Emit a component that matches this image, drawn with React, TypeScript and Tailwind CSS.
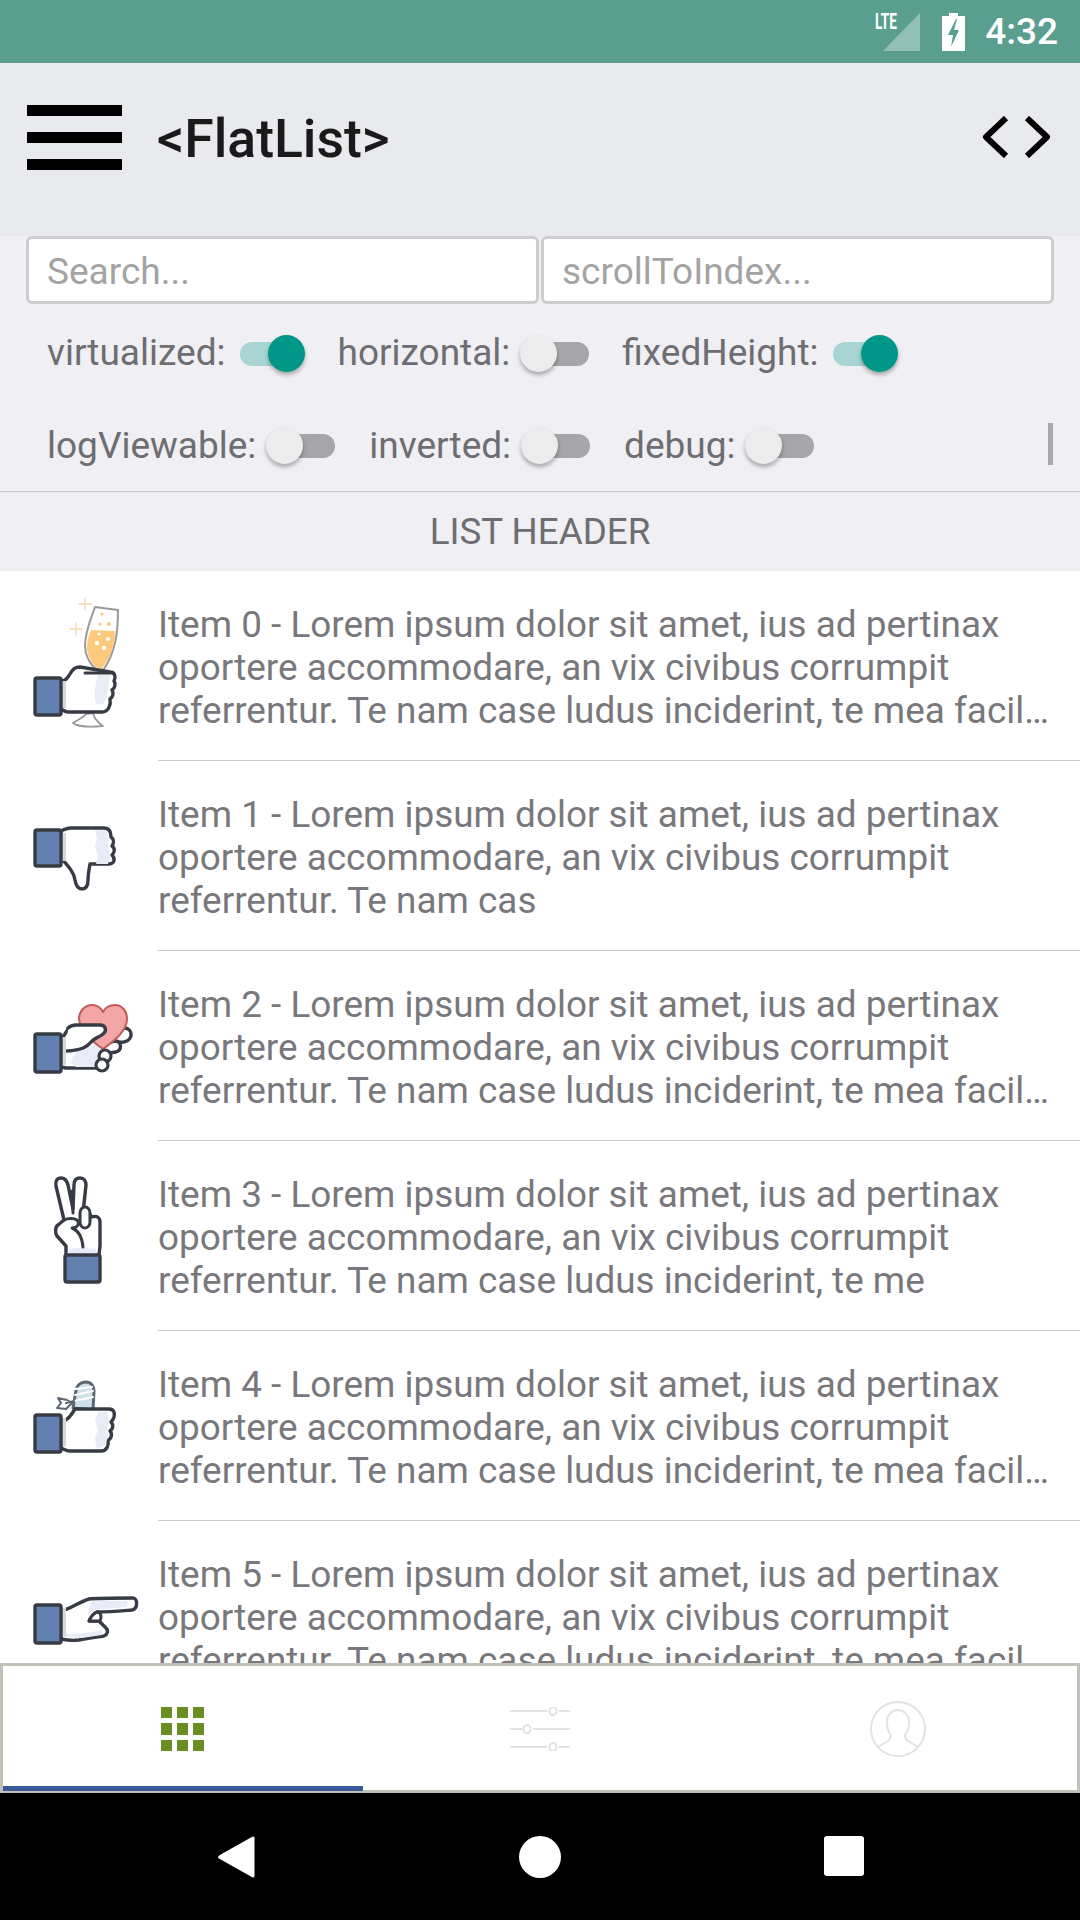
import { ReactNode } from "react";

const LOREM =
  " - Lorem ipsum dolor sit amet, ius ad pertinax oportere accommodare, an vix civibus corrumpit referrentur. ";

const FULL = "Te nam case ludus inciderint, te mea facil…";

const INK = "#373b44";
const SHADE = "#e9ebf6";
const BLUE = "#6381b0";

const Cuff = ({ x = 15, y, w = 26, h = 37 }: { x?: number; y: number; w?: number; h?: number }) => (
  <>
    <rect x={x} y={y} width={w} height={h} rx="2" fill={BLUE} stroke={INK} strokeWidth="3.4" />
  </>
);

const HandIcon = ({ children }: { children: ReactNode }) => (
  <svg
    className="mr-[18px] h-[150px] w-[120px] shrink-0"
    viewBox="0 0 120 150"
    fill="none"
    strokeLinejoin="round"
    strokeLinecap="round">
    {children}
  </svg>
);

const icons = [
  <HandIcon key="0">
    <path d="M65 7v12M59 13h12M56 32v12M50 38h12" stroke="#f3d9b0" strokeWidth="1.3" />
    <path d="M53 132c4-3 10-5 13-9l7-1c1 5 4 9 10 13-10 1-25 1-30-3z" fill="#fff" stroke="#9a9a9a" strokeWidth="1.8" />
    <path d="M75 16L98 19C98 40 96 60 84 78L78 80C70 74 65 64 65 55 65 40 72 25 75 16z" fill="#fff" stroke="#9a9a9a" strokeWidth="2" />
    <path d="M71 39L95 40C95 55 90 68 82 77L78 78C71 72 67 64 67 56 67 50 69 44 71 39z" fill="#fdc97c" />
    <circle cx="77" cy="52" r="2.2" fill="#fff" />
    <circle cx="88" cy="48" r="2" fill="#fff" />
    <circle cx="84" cy="57" r="2.2" fill="#fff" />
    <circle cx="79" cy="43" r="1.6" fill="#fff" />
    <circle cx="80" cy="33" r="1.6" fill="#fdc97c" />
    <circle cx="89" cy="33" r="2" fill="#fdc97c" />
    <circle cx="82" cy="23" r="1.5" fill="#fdc97c" />
    <path
      d="M41 90c4 0 6-2 9-7 3-5 5-7 10-7l30 5c5 0 6 5 4 9 2 3 1 7-2 9 2 3 1 7-2 9 1 5-1 13-8 13H48c-3 0-5-2-7-3z"
      fill="#fff"
      stroke={INK}
      strokeWidth="3.4"
    />
    <path d="M78 84h12l-1 6-1 8-2 9-3 6h-7c-2-8-1-20 2-29z" fill={SHADE} />
    <path d="M65 82l27 0" stroke={INK} strokeWidth="3" />
    <rect x="42" y="90" width="4" height="27" fill="#d6d6d6" />
    <Cuff y={87} />
  </HandIcon>,
  <HandIcon key="1">
    <path
      d="M41 50c4-2 6-3 10-3h33c5 0 7 4 7 9 3 2 3 6 1 9 3 2 3 6 0 9 4 4 2 9-3 9H70c-1 6-2 10-2 16 0 6-2 9-6 9-4 0-6-3-7-9-1-8-7-14-14-22z"
      fill="#fff"
      stroke={INK}
      strokeWidth="3.4"
    />
    <path d="M75 49h10l4 8-1 8 2 9-2 9H76l2-9-3-8 2-8z" fill={SHADE} />
    <rect x="42" y="52" width="4" height="28" fill="#d6d6d6" />
    <Cuff y={49} h={36} />
  </HandIcon>,
  <HandIcon key="2">
    <path d="M84 58L104 57c9 0 10 12 0 14L88 72z" fill="#fff" stroke={INK} strokeWidth="3.4" />
    <path d="M84 72L96 70c6 1 6 9 0 11L82 83z" fill="#fff" stroke={INK} strokeWidth="3.4" />
    <path d="M41 68c4-3 5-8 8-11l30-2v42H46l-5-1z" fill="#fff" stroke={INK} strokeWidth="3.4" />
    <path d="M50 92c4-10 10-18 20-20h12v24H56z" fill={SHADE} />
    <path
      d="M83 78C72 70 60 60 59 48c0-8 6-14 13-14 5 0 9 3 11 7 2-4 6-7 12-7 7 0 12 6 12 14 0 12-13 22-24 30z"
      fill="#f4a6a6"
      stroke="#c35a5a"
      strokeWidth="2"
    />
    <path d="M48 57c2-2 4-3 8-3h24c6 0 7 6 3 9-5 4-9 4-12 8-4 5-9 8-24 9" fill="#fff" stroke={INK} strokeWidth="3.4" />
    <circle cx="85" cy="85" r="6" fill="#fff" stroke={INK} strokeWidth="3.2" />
    <circle cx="82" cy="94" r="6" fill="#fff" stroke={INK} strokeWidth="3.2" />
    <rect x="42" y="66" width="4" height="28" fill="#d6d6d6" />
    <Cuff y={63} h={38} />
  </HandIcon>,
  <HandIcon key="3">
    <path
      d="M46 94V85L37 75c-2-3-2-9 1-11l6-5-8-34c-1-5 1-8 5-8 4 0 6 3 7 7l5 24 1-24c0-5 2-7 6-7 4 0 6 3 6 7l-3 28c4-1 8 2 9 4 5-2 8 1 8 5v24l-1 9z"
      fill="#fff"
      stroke={INK}
      strokeWidth="3.4"
    />
    <path d="M58 60l5 3-1 24 14 1v6H46l4-6 14-2-2-14z" fill={SHADE} />
    <path d="M65 46c3 0 5 3 5 6v9c0 3-2 6-5 6s-5-3-5-6v-9c0-3 2-6 5-6z" fill="#fff" stroke={INK} strokeWidth="3" />
    <path d="M44 59c4-2 10-2 13 0 3 3 1 8-5 8 5 2 10 8 11 19" stroke={INK} strokeWidth="3" />
    <path d="M52 30l1 22" stroke={INK} strokeWidth="3" />
    <Cuff x={45} y={94} w={35} h={27} />
  </HandIcon>,
  <HandIcon key="4">
    <path d="M53 57l3-18c1-5 5-8 10-8 5 0 8 4 8 9l-1 19z" fill="#cfe0ea" stroke="#5c6670" strokeWidth="3" />
    <path d="M55 44l18-4M54 50l19-4M55 38l17-2" stroke="#fff" strokeWidth="2" />
    <path d="M38 47l9 2 5 3-6 6-9-1 4-5zM46 52l8-2" fill="#fff" stroke="#5c6670" strokeWidth="2" />
    <path
      d="M41 71c4-1 7-3 10-7l4-6h34c5 0 6 4 5 8-1 3-2 4-3 5 3 3 2 7-1 9 3 3 1 8-2 9 1 5-1 11-7 11H50c-4 0-6-2-9-3z"
      fill="#fff"
      stroke={INK}
      strokeWidth="3.4"
    />
    <path d="M78 61h9l2 8-2 8 1 9-3 8-8 4-2-10 3-9-3-9z" fill={SHADE} />
    <rect x="42" y="67" width="4" height="28" fill="#d6d6d6" />
    <Cuff y={64} />
  </HandIcon>,
  <HandIcon key="5">
    <path
      d="M41 70c8-1 18-9 28-12 8-1 30-1 44-1 5 0 5 11-1 12-12 1-22 2-35 2-4 2-6 5-8 9h10l7 7c3 3 1 7-2 8-8 1-16 2-25 4-8 1-13 0-18-1z"
      fill="#fff"
      stroke={INK}
      strokeWidth="3.4"
    />
    <path d="M72 60l36 0-1 6-32 3-8 4zM44 92c10 2 24 0 38-3v5l-20 3-18-1z" fill={SHADE} />
    <path d="M70 78c2-4 4-6 8-7 3 1 4 5 2 9H70z" fill="#fff" stroke={INK} strokeWidth="3" />
    <rect x="42" y="67" width="4" height="28" fill="#d6d6d6" />
    <Cuff y={64} h={38} />
  </HandIcon>,
];

const rows = [
  LOREM + FULL,
  LOREM + "Te nam cas",
  LOREM + FULL,
  LOREM + "Te nam case ludus inciderint, te me",
  LOREM + FULL,
  LOREM + FULL,
];

const Toggle = ({ label, on }: { label: string; on?: boolean }) => (
  <div className="flex items-center">
    <span className="mr-[10px] text-[37px] leading-[40px] text-[#6d6d72]">{label}</span>
    <div className="relative h-[37px] w-[69px]">
      <div
        className={
          on
            ? "absolute left-[4px] top-[7px] h-[24px] w-[56px] rounded-full bg-[#a8d5d1]"
            : "absolute left-[6px] top-[7px] h-[24px] w-[63px] rounded-full bg-[#a6a6a8]"
        }
      />
      <div
        className={
          on
            ? "absolute right-0 top-0 h-[37px] w-[37px] rounded-full bg-[#009688] shadow-[0_3px_4px_rgba(0,0,0,0.3)]"
            : "absolute left-0 top-0 h-[37px] w-[37px] rounded-full bg-[#ececec] shadow-[0_3px_4px_rgba(0,0,0,0.3)]"
        }
      />
    </div>
  </div>
);

export default function App() {
  return (
    <div className="flex h-[1920px] w-[1080px] flex-col overflow-hidden bg-white font-['Roboto',sans-serif]">
      {/* status bar */}
      <div className="flex h-[63px] shrink-0 items-center justify-end bg-[#5a9e8f] pr-[22px]">
        <div className="relative mr-[22px] h-[38px] w-[37px]">
          <svg className="absolute inset-0" viewBox="0 0 37 38">
            <path d="M37 0v38H0z" fill="#fff" fillOpacity="0.35" />
          </svg>
          <span className="absolute -left-[8px] top-0 origin-top-left scale-x-[0.62] text-[22px] font-bold leading-[18px] text-white">
            LTE
          </span>
        </div>
        <svg className="mr-[20px] h-[38px] w-[23px]" viewBox="0 0 23 38">
          <path d="M7 0h9v3h7v35H0V3h7z" fill="#fff" />
          <path d="M14 6l-8 16h5l-2 12 8-17h-5l3-11z" fill="#5a9e8f" />
        </svg>
        <span className="text-[37px] font-medium leading-[42px] text-white">4:32</span>
      </div>

      {/* nav bar */}
      <div className="flex h-[173px] shrink-0 items-center bg-[#e9eaed] pb-[25px] pl-[27px] pr-[29px]">
        <div className="flex w-[95px] flex-col gap-[16px]">
          <div className="h-[11px] bg-black" />
          <div className="h-[11px] bg-black" />
          <div className="h-[11px] bg-black" />
        </div>
        <span className="ml-[35px] pt-[3px] text-[53.5px] font-medium leading-[52px] text-[#1a1a1a]">{"<FlatList>"}</span>
        <svg className="ml-auto h-[42px] w-[69px]" viewBox="0 0 69 42" fill="none" stroke="#000" strokeWidth="6" strokeLinejoin="round">
          <path d="M24 2L4 21l20 19" />
          <path d="M45 2l20 19-20 19" />
        </svg>
      </div>

      {/* controls */}
      <div className="shrink-0 bg-[#efeff4]">
        <div className="flex gap-[2px] pl-[26px] pr-[26px]">
          <div className="flex h-[68px] flex-1 items-center rounded-[6px] border-[3px] border-[#cdcdcd] bg-white pl-[18px] pt-[3px] text-[37px] text-[#a3a3a3]">
            Search...
          </div>
          <div className="flex h-[68px] flex-1 items-center rounded-[6px] border-[3px] border-[#cdcdcd] bg-white pl-[18px] pt-[3px] text-[37px] text-[#a3a3a3]">
            scrollToIndex...
          </div>
        </div>
        <div className="flex h-[93px] items-center gap-[33px] pl-[47px] pt-[5px]">
          <Toggle label="virtualized:" on />
          <Toggle label="horizontal:" />
          <Toggle label="fixedHeight:" on />
        </div>
        <div className="relative flex h-[94px] items-center gap-[34px] pl-[47px] pt-[3px]">
          <Toggle label="logViewable:" />
          <Toggle label="inverted:" />
          <Toggle label="debug:" />
          <div className="absolute left-[1048px] top-[26px] h-[42px] w-[5px] bg-[#a9a9ab]" />
        </div>
        <div className="flex h-[80px] items-center justify-center border-t-[1px] border-[#c8c8cc] text-[36.75px] text-[#6d6d72]">
          LIST HEADER
        </div>
      </div>

      {/* list */}
      <div className="min-h-0 flex-1 overflow-hidden">
        {rows.map((text, i) => (
          <div key={i} className="flex h-[190px] pl-[20px]">
            {icons[i] && <div className="pt-[20px]">{icons[i]}</div>}
            <div className="flex-1 border-b-[1px] border-[#c8c8c8] pr-[20px] pt-[32px]">
              <p className="text-[36.9px] leading-[43px] text-[#78787c]">{"Item " + i + text}</p>
            </div>
          </div>
        ))}
      </div>

      {/* tab bar */}
      <div className="relative flex h-[130px] shrink-0 border-x-[3px] border-y-[3px] border-[#c0c2b9] bg-white">
        <div className="flex flex-1 items-center justify-center pt-[2px]">
          <div className="grid grid-cols-3 gap-[5px]">
            {Array.from({ length: 9 }).map((_, i) => (
              <div key={i} className="h-[11.5px] w-[11px] bg-[#6b8e23]" />
            ))}
          </div>
        </div>
        <div className="flex flex-1 items-center justify-center pt-[2px]">
          <svg className="h-[44px] w-[60px]" viewBox="0 0 60 44" fill="none" stroke="#e2e2e2" strokeWidth="2">
            <path d="M0 4h37M49 4h11M0 22h12M23 22h37M0 40h37M49 40h11" />
            <ellipse cx="43" cy="4" rx="3.5" ry="4" />
            <ellipse cx="17" cy="22" rx="3.5" ry="4" />
            <ellipse cx="43" cy="40" rx="3.5" ry="4" />
          </svg>
        </div>
        <div className="flex flex-1 items-center justify-center pt-[2px]">
          <svg className="h-[56px] w-[56px]" viewBox="0 0 56 56" fill="none" stroke="#e2e2e2" strokeWidth="2">
            <circle cx="28" cy="28" r="27" />
            <path d="M8 46l10-6c3-2 3-4 3-6-3-3-4-7-4-13 0-7 5-12 11-12s11 5 11 12c0 6-1 10-4 13 0 2 0 4 3 6l10 6" />
          </svg>
        </div>
        <div className="absolute -bottom-[1px] left-0 h-[5px] w-[360px] bg-[#3b5998]" />
      </div>

      {/* android nav */}
      <div className="flex h-[127px] shrink-0 items-start bg-black pt-[43px]">
        <svg className="ml-[218px] h-[42px] w-[37px]" viewBox="0 0 37 42">
          <path d="M35 2v38L3 22c-2-1-2-1 0-2z" fill="#fff" stroke="#fff" strokeWidth="3" strokeLinejoin="round" />
        </svg>
        <div className="ml-[264px] h-[42px] w-[42px] rounded-full bg-white" />
        <div className="ml-[263px] h-[40px] w-[40px] rounded-[3px] bg-white" />
      </div>
    </div>
  );
}
